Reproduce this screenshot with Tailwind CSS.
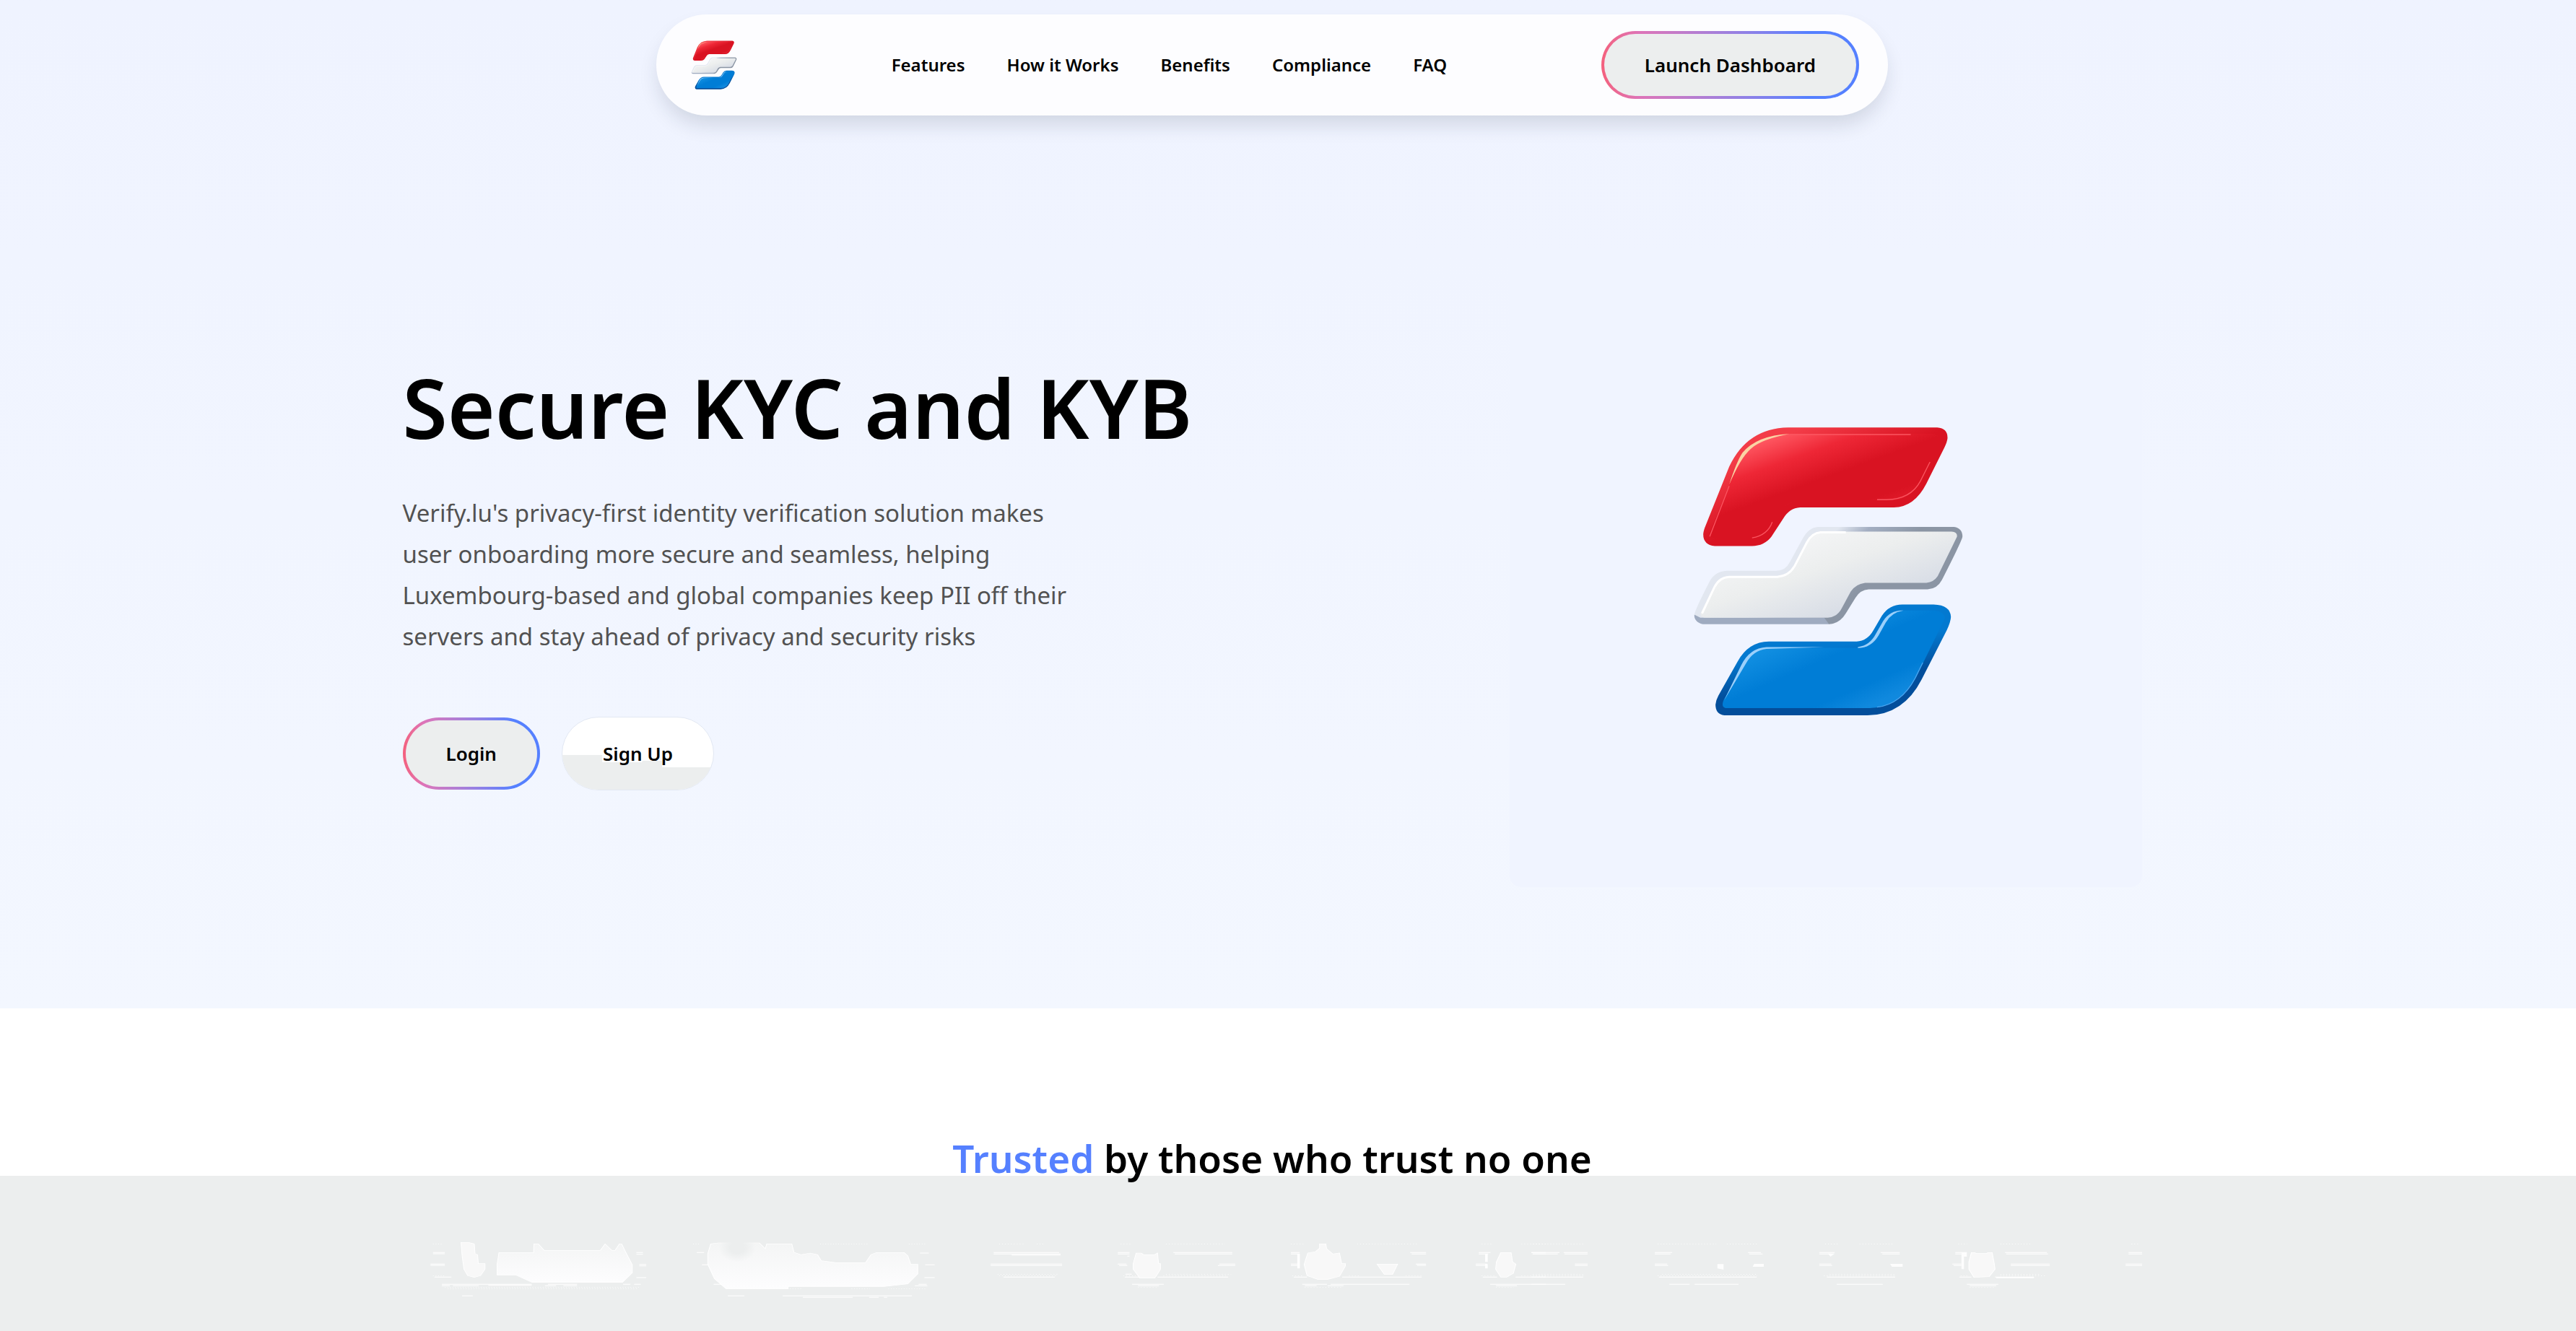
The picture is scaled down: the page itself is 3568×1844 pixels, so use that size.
<!DOCTYPE html>
<html lang="en">
  <head>
    <meta charset="UTF-8" />
    <meta name="viewport" content="width=device-width, initial-scale=1.0" />
    <script src="https://cdn.jsdelivr.net/npm/@tailwindcss/browser@4"></script>
    <title>Verify.lu</title>
  </head>
  <body class="flex min-h-screen flex-col bg-[#eceeee] font-['Noto_Sans',sans-serif] text-black">
    <!-- shared logo -->
    <svg class="absolute h-0 w-0" aria-hidden="true">
      <defs>
        <linearGradient id="red" x1="0" y1="0" x2="0.8" y2="1">
          <stop offset="0.15" stop-color="#ff5862" />
          <stop offset="0.32" stop-color="#ee2736" />
          <stop offset="0.5" stop-color="#d91322" />
          <stop offset="0.72" stop-color="#d91322" />
          <stop offset="0.92" stop-color="#ee2736" />
        </linearGradient>
        <linearGradient id="redEdge" x1="0" y1="0" x2="1" y2="1">
          <stop offset="0.2" stop-color="#f33c48" />
          <stop offset="0.5" stop-color="#d91322" />
        </linearGradient>
        <linearGradient id="white" x1="0" y1="0" x2="1" y2="1">
          <stop offset="0.15" stop-color="#f6f7f8" />
          <stop offset="0.45" stop-color="#eceeee" />
          <stop offset="0.75" stop-color="#d8dde6" />
        </linearGradient>
        <linearGradient id="whiteEdge" gradientUnits="userSpaceOnUse" x1="500" y1="640" x2="780" y2="930">
          <stop offset="0.4" stop-color="#e2e7f0" />
          <stop offset="0.62" stop-color="#a3aec2" />
          <stop offset="1" stop-color="#8b95a4" />
        </linearGradient>
        <linearGradient id="blue" x1="0" y1="0" x2="1" y2="1">
          <stop offset="0.25" stop-color="#1593e4" />
          <stop offset="0.48" stop-color="#007dd6" />
          <stop offset="0.7" stop-color="#007dd6" />
          <stop offset="0.82" stop-color="#1089de" />
        </linearGradient>
        <linearGradient id="blueEdge" x1="0.3" y1="0" x2="0.6" y2="1">
          <stop offset="0.4" stop-color="#0379d0" />
          <stop offset="0.7" stop-color="#034e9b" />
        </linearGradient>
      </defs>
      <symbol id="logo" viewBox="195 150 1125 1210">
        <path fill="url(#redEdge)" d="M590 157H1210Q1253 160 1253 200Q1252 215 1240 240L1165 390Q1115 488 1030 489H640Q595 492 570 535L520 612Q490 650 440 650H285Q237 645 237 600Q238 585 248 562L345 320Q420 160 590 157Z" />
        <path fill="url(#red)" d="M600 183H1190Q1228 186 1222 220L1140 380Q1100 458 1020 460H630Q585 462 550 520Q510 615 430 618H290Q262 616 264 596L375 320Q440 186 600 183Z" />
        <path fill="none" stroke="#fb5560" stroke-width="4" d="M264 610L345 400M590 186H1100M960 457H1000Q1100 455 1140 380L1180 300M440 616Q505 605 524 550" />
        <path fill="#fbd3a4" d="M345 395Q375 300 400 262Q460 190 595 184Q480 205 435 245Q390 285 345 395Z" />
        <path fill="#9fabc0" d="M200 935Q198 965 235 975H760L780 940H215Z" />
        <path fill="url(#whiteEdge)" d="M715 570H1280Q1316 575 1315 612Q1312 630 1230 790Q1210 828 1170 830H925Q890 832 870 865L830 930Q805 972 760 975L740 948H225L200 935Q203 915 262 800Q285 755 335 753H540Q580 752 598 715L650 620Q675 572 715 570Z" />
        <path fill="url(#white)" d="M725 590H1270Q1296 592 1292 612L1212 775Q1195 800 1165 803H910Q870 808 850 840L815 905Q795 946 755 948H245Q220 944 228 925L280 820Q300 776 345 775H545Q590 772 612 735L665 635Q688 592 725 590Z" />
        <path fill="none" stroke="#fff" stroke-width="9" stroke-linejoin="round" d="M232 930L284 820Q304 780 345 778H545Q592 775 616 735L668 635Q690 595 725 593H830" />
        <path fill="url(#blueEdge)" d="M1065 893H1195Q1265 895 1267 945Q1266 965 1250 1000L1145 1205Q1070 1352 920 1354H325Q288 1350 288 1310Q290 1290 300 1272L380 1130Q425 1048 510 1047H875Q920 1045 945 1000L980 940Q1010 893 1065 893Z" />
        <path fill="url(#blue)" d="M1065 918H1190Q1240 920 1242 950L1125 1190Q1060 1320 930 1324H330Q310 1318 322 1290L400 1150Q435 1073 510 1073H880Q935 1068 962 1015L990 965Q1015 920 1065 918Z" />
        <path fill="#9bd0fb" d="M324 1292L395 1145Q430 1074 500 1070H740L500 1078Q445 1084 415 1138ZM880 1070Q930 1064 955 1015L985 962Q1015 915 1070 918Q1020 926 996 968L966 1022Q935 1074 880 1074Z" />
        <path fill="none" stroke="#4aa5f0" stroke-width="4" d="M960 1320Q1060 1308 1118 1200L1150 1135" />
      </symbol>
    </svg>

    <section class="bg-linear-to-b from-[#eff3ff] to-[#f3f7ff] pr-11 pb-42">
      <header class="pt-5">
        <nav class="mx-auto flex h-35 w-full max-w-[1706px] items-center justify-between rounded-full bg-[#fdfdff] pr-10 pl-12 shadow-[0_16px_28px_-4px_rgba(30,41,59,0.15)]">
          <a href="#" aria-label="Verify.lu home"><svg class="h-17 w-16"><use href="#logo" /></svg></a>
          <div class="flex gap-[58px] text-2xl font-semibold">
            <a href="#features">Features</a>
            <a href="#how">How it Works</a>
            <a href="#benefits">Benefits</a>
            <a href="#compliance">Compliance</a>
            <a href="#faq">FAQ</a>
          </div>
          <button class="rounded-full bg-linear-to-r from-[#f4607c] via-[#dd74b8] via-15% to-[#5580ff] to-80% p-1 text-[26px] font-semibold">
            <span class="flex h-[86px] items-center rounded-full bg-[#eceeee] px-14">Launch Dashboard</span>
          </button>
        </nav>
      </header>

      <main class="mx-auto mt-[193px] flex max-w-[2409px] items-center justify-between">
        <div>
          <h1 class="text-[113px] leading-[154px] font-semibold">Secure KYC and KYB</h1>
          <p class="mt-[41px] max-w-[960px] text-[33px] leading-[57px] text-[#525252]">
            Verify.lu's privacy-first identity verification solution makes<br />
            user onboarding more secure and seamless, helping<br />
            Luxembourg-based and global companies keep PII off their<br />
            servers and stay ahead of privacy and security risks
          </p>
          <div class="mt-[83px] flex items-center gap-[30px] text-[26px] font-semibold">
            <button class="rounded-full bg-linear-to-r from-[#f4607c] via-[#dd74b8] via-15% to-[#5580ff] to-80% p-1">
              <span class="flex h-23 items-center rounded-full bg-[#eceeee] px-14">Login</span>
            </button>
            <button class="relative h-[102px] overflow-hidden rounded-full border border-[#e2e8f3] bg-white px-14">
              <svg class="absolute inset-0 h-full w-full" viewBox="0 0 212 100" preserveAspectRatio="none">
                <path fill="#eceeee" d="M0 52H56V62H112V60H140V69H212V100H0Z" />
              </svg>
              <span class="relative">Sign Up</span>
            </button>
          </div>
        </div>
        <div class="flex h-[876px] w-[876px] items-center justify-center rounded-2xl bg-[#f0f4ff]">
          <svg class="ml-2 h-[403px] w-[375px]"><use href="#logo" /></svg>
        </div>
      </main>
    </section>

    <section class="flex-1 bg-[linear-gradient(to_bottom,#ffffff_232px,#eceeee_232px)] pt-44 pr-11">
      <h2 class="text-center text-[53px] leading-16 font-semibold">
        <span class="text-[#5580ff]">Trusted</span> by those who trust no one
      </h2>
      <!-- faded partner logos -->
      <svg class="mx-auto mt-15 w-full max-w-[2409px]" viewBox="557 1697 2409 110" fill="#f8f8f8" stroke="#fff" aria-hidden="true">
        <defs>
          <linearGradient id="fade" x1="0" y1="0" x2="0" y2="1">
            <stop offset="0" stop-color="#f4f5f5" />
            <stop offset="1" stop-color="#fdfdfe" />
          </linearGradient>
          <radialGradient id="notch">
            <stop offset="0.4" stop-color="#eceeee" />
            <stop offset="1" stop-color="#eceeee" stop-opacity="0" />
          </radialGradient>
        </defs>
        <g transform="translate(560 1680) scale(0.5102 0.3333)" stroke-width="2">
          <path d="M152 124H172L188 130L190 170L197 175L199 212H217V235L205 262L188 269L170 262L160 235L155 180Z" />
          <path fill="url(#fade)" d="M255 166H349L350 130H362L378 157H530L543 130L562 157H570L582 130H588L600 167L617 217V250L590 290H345L300 259H250V215Z" />
          <path fill="url(#fade)" d="M830 130L850 126H962L978 150L982 130H1050L1056 165L1075 175L1100 168L1120 175L1130 200L1170 208H1250L1265 175L1280 166H1355L1365 180L1373 215H1392V255L1365 296L1300 307H1040V317H872L840 275L822 215V170Z" />
          <ellipse fill="url(#notch)" stroke="none" cx="902" cy="145" rx="50" ry="60" />
          <path stroke-width="3" d="M76 166H108M76 171H108M69 214H108M69 219H108M80 268H126M100 298H344M100 304H122M130 304H200M226 302H344M388 298H467M380 304H410M430 304H467M592 298H612M622 298H640M155 346H184M628 166H646M628 173H646M636 215H655M636 221H655M628 270H655M792 166H812M806 217H824M838 298H860M1398 168H1422M1412 217H1438M1410 270H1438M1394 298H1416M1384 304H1418M876 346H921M1025 346H1376M1080 352H1215M1260 352H1286M1300 352H1309" />
          <path stroke-dasharray="2 5" d="M76 130H101M76 262H108M108 310H640M116 316H630M782 130H800M1127 130H1255M1368 130H1412M1045 316H1075M1212 316H1262M1312 316H1412" />
        </g>
        <g transform="translate(1340 1680) scale(0.5102 0.3333)" stroke-width="2">
          <path d="M456 168H470L476 175H506L514 168L517 212H522V235L510 265L506 272H466L448 235V212Z" />
          <path d="M954 130H971L973 150L990 172L1008 168L1014 212H1024V222L1008 265L975 278H950L920 262L912 215L922 168L943 162L954 148Z" />
          <path d="M1110 214H1166L1152 257H1130Z" />
          <path d="M1446 166H1474L1478 205L1487 214L1480 252L1462 268H1446L1432 235L1434 205Z" />
          <path stroke-width="3" d="M69 166H247M69 172H251M118 176H251M61 214H255M61 220H255M96 268H235M406 166H438M406 172H438M432 181H438M406 214H430M410 220H432M427 256H444M425 268H466M514 268H706M557 166H717M561 172H717M682 214H725M678 220H725M445 298H531M461 304H518M876 166H900M876 172H900M876 214H900M876 220H900M884 268H920M1015 268H1231M907 298H974M984 298H1198M914 304H946M976 304H1019M1200 166H1243M1204 172H1243M1215 214H1243M1218 219H1243M1386 166H1418M1386 172H1412M1378 214H1408M1378 220H1408M1397 268H1436M1486 268H1568M1417 298H1568M1433 304H1490M1529 166H1568M1533 172H1568" />
          <path stroke-width="7" d="M897 172V232M1407 172V205M1407 214V232" />
          <path stroke-dasharray="2 6" d="M84 130H150M186 130H206M80 256H243M84 262H243M414 130H440M537 130H698M537 256H714M530 262H706M421 262H456M876 130H910M1056 130H1224M880 262H912M1034 262H1066M1188 262H1232M1394 130H1422M1502 130H1568M1394 262H1430M1502 262H1568M461 310H512M914 310H1012M1433 310H1482" />
        </g>
        <g transform="translate(2120 1680) scale(0.574 0.3333)" stroke-width="2">
          <path d="M1062 166H1070L1074 170H1098L1102 166H1112L1117 212L1119 235L1105 266L1068 269L1056 235V205Z" />
          <path stroke="none" fill="#fdfdfd" d="M449 214H464V237L449 232ZM538 213H561V225H534ZM866 213H896V225H870ZM716 170H732L722 183ZM1038 166H1051V183H1044V235H1038Z" />
          <path stroke-width="3" d="M0 166H68M78 166H136M3 172H64M80 172H136M105 214H136M105 220H136M0 268H125M0 298H82M298 166H340M298 172H336M298 214H328M298 220H330M523 166H554M526 172H558M308 268H544M333 298H382M394 298H500M695 166H732M695 172H724M695 214H724M695 220H726M843 166H889M847 172H889M713 268H878M737 298H848M1023 166H1051M1023 172H1038M1016 214H1038M1019 220H1038M1033 268H1062M1119 268H1213M1122 271H1213M1143 166H1244M1146 172H1247M1157 214H1251M1157 220H1251M1051 298H1127M1058 304H1122M1441 166H1474M1441 172H1474M1434 214H1474M1434 220H1474" />
          <path stroke-dasharray="2 5" d="M4 130H126M4 256H126M4 262H126M305 130H446M472 130H546M316 256H544M305 262H544M709 130H740M792 130H872M720 256H876M706 262H878M1030 130H1052M1132 130H1206M1036 262H1056M1132 256H1230M1132 262H1240M1058 310H1116M1448 130H1464" />
        </g>
      </svg>
    </section>
  </body>
</html>
